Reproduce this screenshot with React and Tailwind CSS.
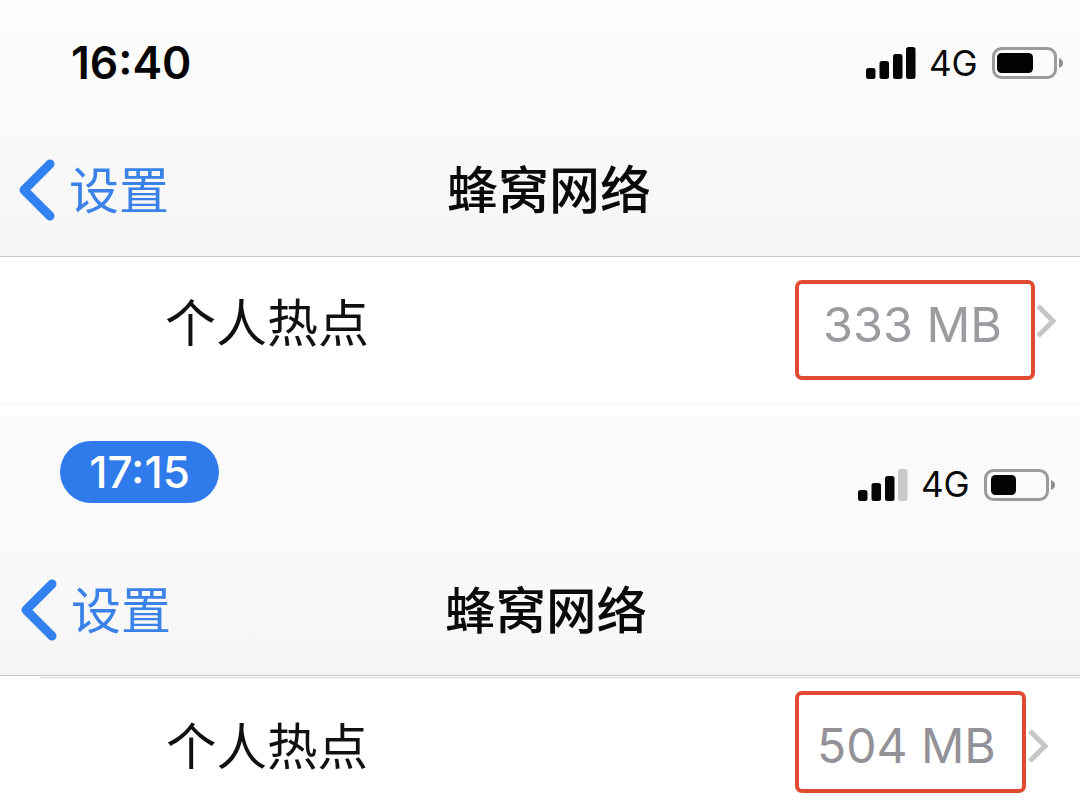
const cjk = { fontFamily: '"Noto Sans CJK SC", sans-serif' };

function Signal({ level }) {
  const bars = [
    { x: 0, y: 21, h: 11 },
    { x: 13.5, y: 14, h: 18 },
    { x: 27, y: 7, h: 25 },
    { x: 40, y: 0, h: 32 },
  ];
  return (
    <svg width="50" height="32" viewBox="0 0 50 32" className="shrink-0">
      {bars.map((b, i) => (
        <rect key={i} x={b.x} y={b.y} width="9.5" height={b.h} rx="2.5" fill={i < level ? "#050505" : "#c9c9cc"} />
      ))}
    </svg>
  );
}

function Battery({ fill, start }) {
  return (
    <svg width="72" height="32" viewBox="0 0 72 32" className="shrink-0">
      <rect x="1.5" y="1.5" width="62" height="29" rx="8" fill="none" stroke="#9b9b9e" strokeWidth="3" />
      <rect x={start} y="6" width={fill} height="20" rx="4.5" fill="#030303" />
      <path d="M67 11 C70 12 71 14 71 16 C71 18 70 20 67 21 Z" fill="#8f8f92" />
    </svg>
  );
}

function Back() {
  return (
    <svg width="36" height="62" viewBox="0 0 36 62" className="shrink-0">
      <path d="M31 5 L5 31 L31 57" fill="none" stroke="#3182f0" strokeWidth="9" strokeLinecap="round" strokeLinejoin="round" />
    </svg>
  );
}

function Disclosure() {
  return (
    <svg width="22" height="36" viewBox="0 0 22 36" className="shrink-0">
      <path d="M3 3 L18 18 L3 33" fill="none" stroke="#c6c6c9" strokeWidth="5" />
    </svg>
  );
}

function Status({ level, fill, start }) {
  return (
    <div className="flex items-center">
      <Signal level={level} />
      <span className="ml-[13px] w-[49px] text-[35px] leading-none text-[#0a0a0a]" style={{ fontFamily: "Inter, sans-serif" }}>4G</span>
      <span className="ml-[14px]"><Battery fill={fill} start={start} /></span>
    </div>
  );
}

export default function App() {
  return (
    <div className="w-[1080px] h-[809px] overflow-hidden bg-white" style={cjk}>
      {/* first capture */}
      <div className="h-[256px] bg-linear-to-b from-[#fcfcfd] via-[#fafafb] to-[#f5f5f6] flex flex-col">
        <div className="h-[126px] flex items-center justify-between pl-[71px] pr-[16px]">
          <span className="text-[44.5px] leading-none font-semibold text-[#050505]" style={{ fontFamily: "Inter, sans-serif" }}>16:40</span>
          <Status level={4} fill={36} start={5} />
        </div>
        <div className="h-[128px] flex items-center pl-[19px]">
          <Back />
          <span className="ml-[14px] mb-[6px] w-[100px] text-[50px] leading-none whitespace-nowrap text-[#3a82e8]">设置</span>
          <span className="ml-[278px] mb-[6px] text-[51px] leading-none font-medium whitespace-nowrap text-[#0a0a0a]">蜂窝网络</span>
        </div>
      </div>
      <div className="h-[1px] bg-[#c8c8cb]" />
      <div className="h-[147px] flex items-start border-b border-[#f6f6f8]">
        <span className="ml-[165px] mt-[38px] text-[51px] leading-[50px] whitespace-nowrap text-[#111]">个人热点</span>
        <div className="ml-[426px] mt-[23px] w-[240px] h-[100px] rounded-[7px] border-[4px] border-[#e04a30] flex items-center pl-[24px] pb-[10px] text-[48.5px] leading-none text-[#9b9ba0]" style={{ fontFamily: "Inter, sans-serif" }}>333 MB</div>
        <span className="mt-[46px]"><Disclosure /></span>
      </div>

      {/* second capture */}
      <div className="mt-[12px] h-[259px] bg-linear-to-b from-[#fbfbfd] via-[#fafafb] to-[#f5f5f6] flex flex-col">
        <div className="h-[132px] flex items-start justify-between pl-[60px] pr-[24px]">
          <span className="mt-[25px] w-[159px] h-[62px] rounded-[31px] bg-[#2f7bec] flex items-center justify-center text-[44px] leading-none font-medium text-white" style={{ fontFamily: "Inter, sans-serif" }}>17:15</span>
          <span className="mt-[51px]"><Status level={3} fill={25} start={7} /></span>
        </div>
        <div className="h-[124px] flex items-center pl-[21px]">
          <Back />
          <span className="ml-[14px] mb-[6px] w-[100px] text-[50px] leading-none whitespace-nowrap text-[#3a82e8]">设置</span>
          <span className="ml-[274px] mb-[6px] text-[50.5px] leading-none font-medium whitespace-nowrap text-[#0a0a0a]">蜂窝网络</span>
        </div>
      </div>
      <div className="h-[1px] bg-[#c8c8cb]" />
      <div className="ml-[40px] mt-[1px] h-[1px] bg-[#d8d8da]" />
      <div className="h-[130px] flex items-start">
        <span className="ml-[166px] mt-[40px] text-[50.5px] leading-[50px] whitespace-nowrap text-[#111]">个人热点</span>
        <div className="ml-[427px] mt-[13px] w-[231px] h-[102px] rounded-[7px] border-[4px] border-[#e04a30] flex items-center pl-[18px] pt-[8px] text-[48px] leading-none text-[#929298]" style={{ fontFamily: "Inter, sans-serif" }}>504 MB</div>
        <span className="ml-[1px] mt-[50px]"><Disclosure /></span>
      </div>
    </div>
  );
}
